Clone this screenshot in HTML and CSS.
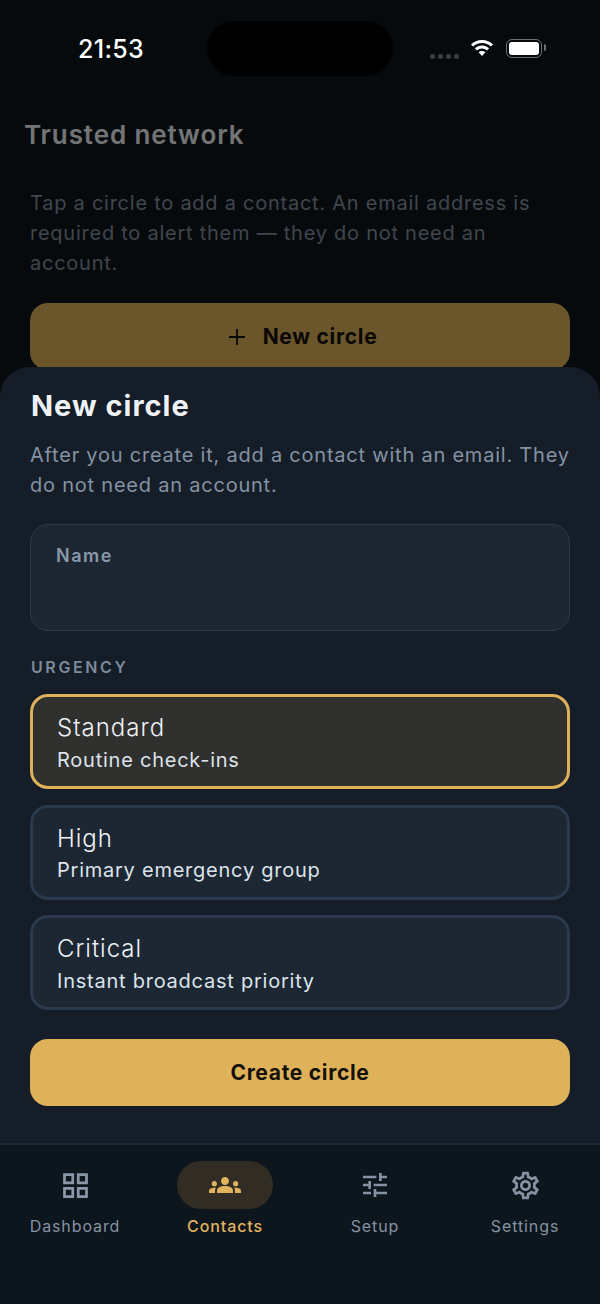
FILE: index.html
```html
<!DOCTYPE html>
<html lang="en">
<head>
  <meta charset="UTF-8">
  <meta name="viewport" content="width=device-width, initial-scale=1.0">
  <title>New circle</title>
  <link rel="stylesheet" href="styles.css">
</head>
<body>
  <div class="app">
    <div class="main">
      <div class="screen">
        <h1>Trusted network</h1>
        <p class="intro">Tap a circle to add a contact. An email address is required to alert them — they do not need an account.</p>
        <button class="btn add-btn">
          <svg width="20" height="20" viewBox="0 0 20 20" fill="none" stroke="#15110a" stroke-width="1.8"><path d="M10 2v16M2 10h16"/></svg>
          New circle
        </button>
      </div>
      <div class="scrim"></div>

      <div class="status-bar">
        <span class="time">21:53</span>
        <div class="island"></div>
        <div class="status-icons">
          <div class="dots"><i></i><i></i><i></i><i></i></div>
          <svg class="wifi" width="24" height="18" viewBox="0 0 24 18" fill="#fff">
            <path d="M12 1C7.600 1 3.800 2.700 1 5.400l2.100 2.200C5.400 5.400 8.500 4 12 4s6.600 1.400 8.900 3.600L23 5.400C20.200 2.700 16.400 1 12 1z"/>
            <path d="M12 6.500c-2.800 0-5.300 1.100-7.100 2.800L7 11.500c1.300-1.200 3.100-2 5-2s3.700.8 5 2l2.100-2.200C17.300 7.600 14.800 6.500 12 6.500z"/>
            <path d="M12 12c-1.300 0-2.500.5-3.400 1.300L12 17l3.400-3.700C14.500 12.500 13.300 12 12 12z"/>
          </svg>
          <div class="battery"><div class="battery-fill"></div></div>
        </div>
      </div>

      <div class="sheet">
        <h2>New circle</h2>
        <p class="sheet-text">After you create it, add a contact with an email. They do not need an account.</p>
        <div class="field">
          <label for="circle-name">Name</label>
          <input id="circle-name" type="text">
        </div>
        <div class="section-label">URGENCY</div>
        <div class="options">
          <div class="option selected">
            <div class="option-title">Standard</div>
            <div class="option-sub">Routine check-ins</div>
          </div>
          <div class="option">
            <div class="option-title">High</div>
            <div class="option-sub">Primary emergency group</div>
          </div>
          <div class="option">
            <div class="option-title">Critical</div>
            <div class="option-sub">Instant broadcast priority</div>
          </div>
        </div>
        <button class="btn create-btn">Create circle</button>
      </div>
    </div>

    <nav class="tabs">
      <div class="tab">
        <div class="tab-icon">
          <svg width="33" height="33" viewBox="0 0 24 24" fill="#8a97a8">
            <path d="M3 3v8h8V3H3zm6 6H5V5h4v4zm-6 4v8h8v-8H3zm6 6H5v-4h4v4zm4-16v8h8V3h-8zm6 6h-4V5h4v4zm-6 4v8h8v-8h-8zm6 6h-4v-4h4v4z"/>
          </svg>
        </div>
        <span>Dashboard</span>
      </div>
      <div class="tab active">
        <div class="tab-icon">
          <svg width="32" height="32" viewBox="0 0 24 24" fill="#e0b45c">
            <path d="M12 12.750c1.630 0 3.070.39 4.240.9 1.080.48 1.760 1.560 1.760 2.730V18H6v-1.610c0-1.180.68-2.260 1.760-2.730 1.170-.52 2.610-.91 4.240-.91zM4 13c1.100 0 2-.9 2-2s-.9-2-2-2-2 .9-2 2 .9 2 2 2zm1.130 1.100c-.37-.06-.74-.1-1.130-.1-.99 0-1.930.21-2.780.58C.48 14.900 0 15.620 0 16.430V18h4.500v-1.610c0-.83.23-1.610.63-2.290zM20 13c1.100 0 2-.9 2-2s-.9-2-2-2-2 .9-2 2 .9 2 2 2zm4 3.430c0-.81-.48-1.530-1.220-1.850-.85-.37-1.790-.58-2.780-.58-.39 0-.76.04-1.130.1.4.68.63 1.460.63 2.290V18H24v-1.570zM12 6c1.660 0 3 1.340 3 3s-1.340 3-3 3-3-1.340-3-3 1.340-3 3-3z"/>
          </svg>
        </div>
        <span>Contacts</span>
      </div>
      <div class="tab">
        <div class="tab-icon">
          <svg width="32" height="32" viewBox="0 0 24 24" fill="#8592a3">
            <path d="M3 17v2h6v-2H3zM3 5v2h10V5H3zm10 16v-2h8v-2h-8v-2h-2v6h2zM7 9v2H3v2h4v2h2V9H7zm14 4v-2H11v2h10zm-6-4h2V7h4V5h-4V3h-2v6z"/>
          </svg>
        </div>
        <span>Setup</span>
      </div>
      <div class="tab">
        <div class="tab-icon">
          <svg width="33" height="33" viewBox="0 0 24 24" fill="#8592a3">
            <path d="M19.430 12.980c.04-.32.07-.64.07-.98 0-.34-.03-.66-.07-.98l2.110-1.650c.19-.15.24-.42.12-.64l-2-3.460c-.09-.16-.26-.25-.44-.25-.06 0-.12.01-.17.03l-2.490 1c-.52-.4-1.080-.73-1.690-.98l-.38-2.650C14.460 2.180 14.250 2 14 2h-4c-.25 0-.46.18-.49.42l-.38 2.650c-.61.25-1.170.59-1.690.98l-2.490-1c-.06-.02-.12-.03-.18-.03-.17 0-.34.09-.43.25l-2 3.460c-.13.22-.07.49.12.64l2.110 1.650c-.04.32-.07.65-.07.98 0 .33.03.66.07.98l-2.110 1.650c-.19.15-.24.42-.12.64l2 3.460c.09.16.26.25.44.25.06 0 .12-.01.17-.03l2.490-1c.52.4 1.080.73 1.690.98l.38 2.650c.03.24.24.42.49.42h4c.25 0 .46-.18.49-.42l.38-2.650c.61-.25 1.170-.59 1.690-.98l2.490 1c.06.02.12.03.18.03.17 0 .34-.09.43-.25l2-3.460c.12-.22.07-.49-.12-.64l-2.110-1.650zm-1.980-1.710c.04.31.05.52.05.73 0 .21-.02.43-.05.73l-.14 1.130.89.7 1.080.84-.7 1.210-1.270-.51-1.040-.42-.9.68c-.43.32-.84.56-1.250.73l-1.060.43-.16 1.130-.2 1.350h-1.400l-.19-1.350-.16-1.130-1.060-.43c-.43-.18-.83-.41-1.230-.71l-.91-.7-1.060.43-1.270.51-.7-1.210 1.080-.84.89-.7-.14-1.130c-.03-.31-.05-.54-.05-.74s.02-.43.05-.73l.14-1.130-.89-.7-1.080-.84.7-1.210 1.270.51 1.040.42.9-.68c.43-.32.84-.56 1.250-.73l1.060-.43.16-1.130.2-1.350h1.390l.19 1.350.16 1.130 1.060.43c.43.18.83.41 1.230.71l.91.7 1.060-.43 1.270-.51.7 1.210-1.070.85-.89.7.14 1.130zM12 8c-2.210 0-4 1.790-4 4s1.790 4 4 4 4-1.790 4-4-1.790-4-4-4zm0 6c-1.100 0-2-.9-2-2s.9-2 2-2 2 .9 2 2-.9 2-2 2z"/>
          </svg>
        </div>
        <span>Settings</span>
      </div>
    </nav>
  </div>
</body>
</html>
```

FILE: styles.css
```css
* {
  box-sizing: border-box;
}
body {
  margin: 0;
  font-family: Inter, "Noto Sans", sans-serif;
  background-color: #0d151d;
}
.app {
  width: 600px;
  height: 1304px;
  display: flex;
  flex-direction: column;
  overflow: hidden;
}
.main {
  flex: 1;
  position: relative;
}
.screen {
  padding: 119px 30px 0;
}
.screen h1 {
  margin: 0 0 0 -6px;
  font-size: 26px;
  line-height: 32px;
  font-weight: 600;
  letter-spacing: 0.9px;
  color: #eef2f6;
}
.intro {
  margin: 37px 0 25px;
  font-size: 20px;
  line-height: 30px;
  letter-spacing: 0.75px;
  color: #8592a3;
}
.btn {
  display: flex;
  align-items: center;
  justify-content: center;
  width: 100%;
  height: 67px;
  border: none;
  border-radius: 18px;
  background-color: #dfb25a;
  color: #15110a;
  font-family: inherit;
  font-size: 21px;
  font-weight: 700;
  letter-spacing: 0.7px;
}
.add-btn {
  gap: 16px;
  padding-left: 10px;
}
.scrim {
  position: absolute;
  inset: 0;
  background: rgba(0, 0, 0, 0.52);
}
.status-bar {
  position: absolute;
  top: 0;
  left: 0;
  right: 0;
  height: 80px;
}
.time {
  position: absolute;
  left: 78px;
  top: 34px;
  font-size: 25px;
  line-height: 30px;
  font-weight: 500;
  letter-spacing: 0.3px;
  color: #fff;
}
.island {
  position: absolute;
  left: 207px;
  top: 21px;
  width: 186px;
  height: 55px;
  border-radius: 28px;
  background: #000;
}
.status-icons {
  position: absolute;
  left: 430px;
  top: 39px;
  display: flex;
  align-items: flex-start;
}
.dots {
  display: flex;
  gap: 3px;
  margin-top: 15px;
}
.dots i {
  width: 5px;
  height: 5px;
  border-radius: 50%;
  background: #3a3d42;
}
.wifi {
  margin-left: 11px;
}
.battery {
  position: relative;
  margin-left: 12px;
  width: 36px;
  height: 19px;
  padding: 2px;
  border: 1.5px solid #6d6f73;
  border-radius: 6px;
}
.battery::after {
  content: "";
  position: absolute;
  right: -5px;
  top: 4px;
  width: 2px;
  height: 7px;
  border-radius: 0 2px 2px 0;
  background: #6d6f73;
}
.battery-fill {
  height: 100%;
  border-radius: 3px;
  background: #fff;
}
.sheet {
  position: absolute;
  left: 0;
  right: 0;
  bottom: 0;
  height: 778px;
  padding: 20px 30px 0;
  background: #151d28;
  border-radius: 30px 30px 0 0;
  border-bottom: 2px solid #1c2834;
}
.sheet h2 {
  margin: 0 0 0 1px;
  font-size: 29px;
  line-height: 38px;
  font-weight: 700;
  letter-spacing: 1px;
  color: #eef2f6;
}
.sheet-text {
  margin: 15px -4px 0 0;
  font-size: 20px;
  line-height: 30px;
  letter-spacing: 0.78px;
  color: #8592a3;
}
.field {
  margin-top: 24px;
  height: 107px;
  padding: 20px 25px;
  background: #1c2733;
  border: 1.5px solid #2a3a4c;
  border-radius: 18px;
}
.field label {
  display: block;
  font-size: 18px;
  line-height: 22px;
  font-weight: 600;
  letter-spacing: 1.5px;
  color: #8a98aa;
}
.field input {
  display: block;
  width: 100%;
  height: 30px;
  padding: 0;
  border: none;
  outline: none;
  background: transparent;
}
.section-label {
  margin: 26px 0 17px 1px;
  font-size: 16px;
  line-height: 20px;
  font-weight: 600;
  letter-spacing: 2.6px;
  color: #7c8a9b;
}
.options {
  display: flex;
  flex-direction: column;
  gap: 15.5px;
}
.option {
  height: 95px;
  padding: 15px 24px 0;
  background: #1c2733;
  border: 3px solid #2a3a4c;
  border-radius: 18px;
}
.option.selected {
  background: #30302f;
  border-color: #dfb25a;
}
.option-title {
  font-size: 24px;
  line-height: 32px;
  font-weight: 300;
  letter-spacing: 1px;
  color: #eef2f6;
}
.option-sub {
  margin-top: 1.5px;
  font-size: 20px;
  line-height: 28px;
  letter-spacing: 0.76px;
  color: #dde3ea;
}
.create-btn {
  margin-top: 29px;
}
.tabs {
  height: 159px;
  display: flex;
  padding-top: 16px;
  background: #0d151d;
}
.tab {
  flex: 1;
  display: flex;
  flex-direction: column;
  align-items: center;
  font-size: 16px;
  line-height: 20px;
  letter-spacing: 0.9px;
  color: #8592a3;
}
.tab-icon {
  display: flex;
  align-items: center;
  justify-content: center;
  width: 96px;
  height: 48px;
  margin-bottom: 7px;
  border-radius: 24px;
}
.tab.active {
  color: #e0b45c;
  font-weight: 500;
}
.tab.active .tab-icon {
  background: #322d24;
}
```
